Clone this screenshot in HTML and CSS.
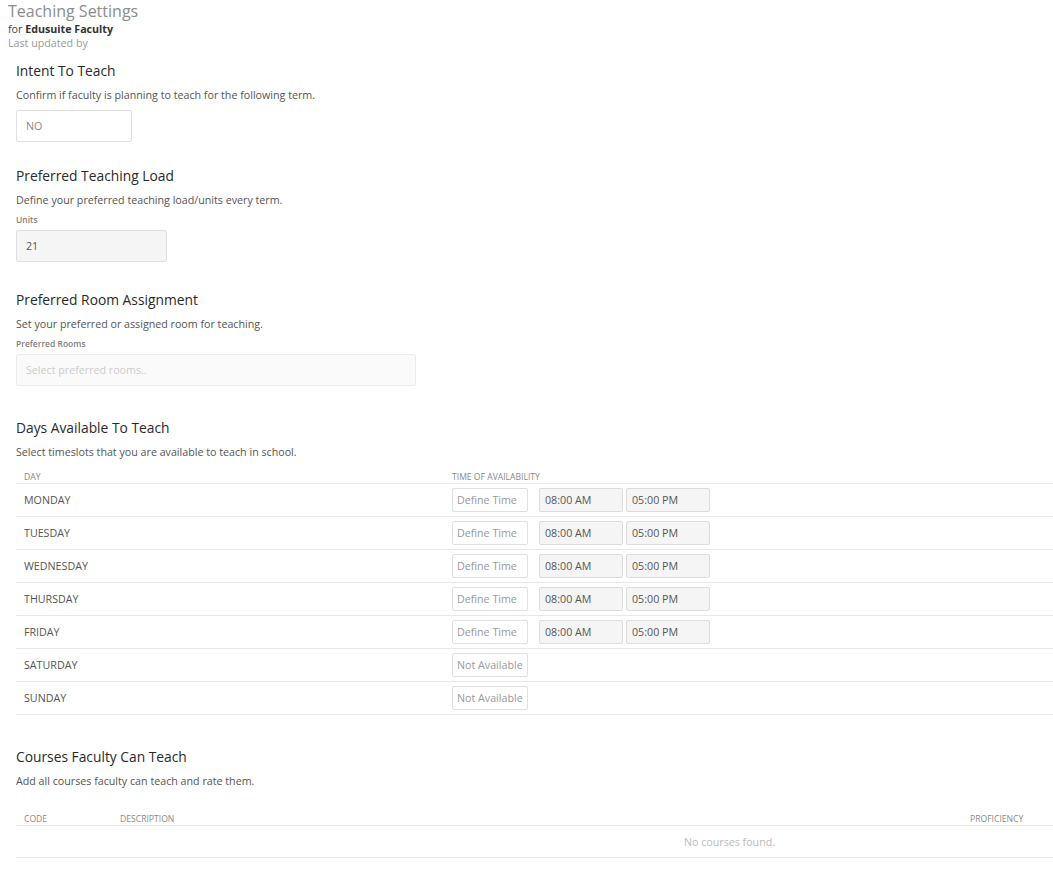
FILE: index.html
```
<!DOCTYPE html>
<html lang="en">
<head>
  <meta charset="UTF-8" />
  <title>Teaching Settings</title>
  <link rel="stylesheet" href="styles.css">
</head>
<body>
  <div class="page-head">
    <h1>Teaching Settings</h1>
    <div class="for">for <b>Edusuite Faculty</b></div>
    <div class="updated">Last updated by</div>
  </div>

  <div class="section sec-intent">
    <h2>Intent To Teach</h2>
    <p>Confirm if faculty is planning to teach for the following term.</p>
    <div class="box box-intent">NO</div>
  </div>

  <div class="section sec-load">
    <h2>Preferred Teaching Load</h2>
    <p>Define your preferred teaching load/units every term.</p>
    <label>Units</label>
    <div class="box box-units">21</div>
  </div>

  <div class="section sec-rooms">
    <h2>Preferred Room Assignment</h2>
    <p>Set your preferred or assigned room for teaching.</p>
    <label>Preferred Rooms</label>
    <div class="box box-rooms">Select preferred rooms..</div>
  </div>

  <div class="section sec-days">
    <h2>Days Available To Teach</h2>
    <p>Select timeslots that you are available to teach in school.</p>
    <div class="days">
      <div class="days-head">
        <span class="th day-col">DAY</span>
        <span class="th">TIME OF AVAILABILITY</span>
      </div>
      <div class="day-row">
        <span class="day-col">MONDAY</span>
        <span class="times"><span class="pill">Define Time</span><span class="time">08:00 AM</span><span class="time">05:00 PM</span></span>
      </div>
      <div class="day-row">
        <span class="day-col">TUESDAY</span>
        <span class="times"><span class="pill">Define Time</span><span class="time">08:00 AM</span><span class="time">05:00 PM</span></span>
      </div>
      <div class="day-row">
        <span class="day-col">WEDNESDAY</span>
        <span class="times"><span class="pill">Define Time</span><span class="time">08:00 AM</span><span class="time">05:00 PM</span></span>
      </div>
      <div class="day-row">
        <span class="day-col">THURSDAY</span>
        <span class="times"><span class="pill">Define Time</span><span class="time">08:00 AM</span><span class="time">05:00 PM</span></span>
      </div>
      <div class="day-row">
        <span class="day-col">FRIDAY</span>
        <span class="times"><span class="pill">Define Time</span><span class="time">08:00 AM</span><span class="time">05:00 PM</span></span>
      </div>
      <div class="day-row">
        <span class="day-col">SATURDAY</span>
        <span class="times"><span class="pill">Not Available</span></span>
      </div>
      <div class="day-row">
        <span class="day-col">SUNDAY</span>
        <span class="times"><span class="pill">Not Available</span></span>
      </div>
    </div>
  </div>

  <div class="section sec-courses">
    <h2>Courses Faculty Can Teach</h2>
    <p>Add all courses faculty can teach and rate them.</p>
    <div class="courses">
      <div class="courses-head">
        <span class="th">CODE</span>
        <span class="th">DESCRIPTION</span>
        <span class="th">PROFICIENCY</span>
      </div>
      <div class="empty">No courses found.</div>
    </div>
  </div>
</body>
</html>
```

FILE: styles.css
```
* {
  box-sizing: border-box;
  margin: 0;
  padding: 0;
}

body {
  font-family: 'Open Sans', 'Noto Sans', sans-serif;
  color: #555;
  background: #fff;
  padding: 0 0 0 8px;
}

.page-head h1 {
  font-size: 16px;
  font-weight: 400;
  color: #8c8c8c;
  line-height: 22px;
}

.for {
  font-size: 10.7px;
  color: #444;
  line-height: 14px;
}

.for b {
  font-weight: 700;
  color: #333;
}

.updated {
  font-size: 10.7px;
  color: #9a9a9a;
  line-height: 14px;
}

.section {
  padding-left: 8px;
}

.sec-intent {
  margin-top: 11px;
}

.sec-load {
  margin-top: 24px;
}

.sec-rooms {
  margin-top: 28px;
}

.sec-days,
.sec-courses {
  margin-top: 32px;
}

h2 {
  font-size: 13.8px;
  font-weight: 400;
  color: #2a2a2a;
  line-height: 20px;
}

.section p {
  font-size: 10.7px;
  line-height: 15px;
  margin-top: 7px;
  color: #555;
}

label {
  display: block;
  font-size: 8.5px;
  font-weight: 600;
  color: #808080;
  margin-top: 6px;
  line-height: 11px;
}

.box {
  font-size: 10.7px;
  border: 1px solid #e0e0e0;
  border-radius: 2px;
  height: 32px;
  line-height: 30px;
  padding: 0 9px;
}

.box-intent {
  width: 116px;
  margin-top: 7px;
  color: #888;
}

.box-units {
  width: 151px;
  margin-top: 5px;
  background: #f5f5f5;
  color: #555;
}

.box-rooms {
  width: 400px;
  margin-top: 5px;
  background: #fafafa;
  border-color: #ebebeb;
  color: #ccc;
}

.th {
  font-size: 8.6px;
  color: #888;
}

.days {
  margin-top: 11px;
}

.days-head {
  display: flex;
  height: 13px;
  line-height: 12px;
  border-bottom: 1px solid #e8e8e8;
}

.day-col {
  width: 436px;
  flex-shrink: 0;
  padding-left: 8px;
}

.day-row {
  display: flex;
  align-items: center;
  height: 33px;
  border-bottom: 1px solid #e8e8e8;
  font-size: 10.7px;
  color: #555;
}

.times {
  display: flex;
  align-items: center;
}

.pill {
  width: 76px;
  height: 24px;
  line-height: 22px;
  border: 1px solid #e0e0e0;
  border-radius: 2px;
  padding-left: 4px;
  color: #999;
  white-space: nowrap;
  overflow: hidden;
}

.time {
  width: 84px;
  height: 24px;
  line-height: 22px;
  border: 1px solid #dcdcdc;
  border-radius: 2px;
  background: #f5f5f5;
  padding-left: 5px;
  color: #555;
  margin-left: 3px;
}

.pill + .time {
  margin-left: 11px;
}

.courses {
  margin-top: 24px;
}

.courses-head {
  display: grid;
  grid-template-columns: 96px 1fr 83px;
  height: 13px;
  line-height: 12px;
  border-bottom: 1px solid #e8e8e8;
  padding-left: 8px;
}

.empty {
  height: 32px;
  line-height: 32px;
  font-size: 10.7px;
  color: #bbb;
  text-align: center;
  padding-left: 390px;
  border-bottom: 1px solid #e8e8e8;
}
```
